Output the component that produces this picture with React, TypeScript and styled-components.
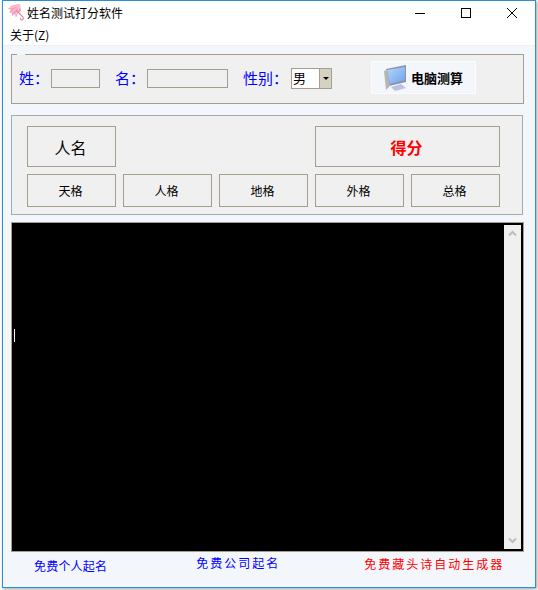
import { FC } from "react";
import styled, { createGlobalStyle } from "styled-components";

const GlobalStyle = createGlobalStyle`
  html, body {
    margin: 0;
    padding: 0;
    background: #ffffff;
  }
  * {
    box-sizing: border-box;
  }
`;

const Screen = styled.div`
  width: 538px;
  height: 590px;
  padding: 0 2px 2px 2px;
  overflow: hidden;
  font-family: "Noto Sans CJK SC", "Liberation Sans", sans-serif;
`;

const Window = styled.div`
  width: 534px;
  height: 588px;
  border: 1px solid #2b8fdc;
  box-shadow: 1px 1px 3px rgba(0, 0, 0, 0.4);
  display: flex;
  flex-direction: column;
  background: #f3f6fb;
`;

const TitleBar = styled.div`
  height: 24px;
  background: #ffffff;
  display: flex;
  align-items: center;
  padding-left: 3px;
`;

const AppTitle = styled.span`
  font-size: 12px;
  color: #000000;
  margin: -2px 0 0 1px;
`;

const WindowButtons = styled.div`
  margin-left: auto;
  display: flex;
  align-items: center;
  height: 100%;
`;

const WindowButton = styled.div`
  width: 46px;
  height: 100%;
  display: flex;
  align-items: center;
  justify-content: center;
`;

const MenuBar = styled.div`
  height: 20px;
  background: #ffffff;
  padding: 1px 0 0 7px;
  font-size: 12px;
  line-height: 18px;
  color: #000000;
`;

const MenuEdge = styled.div`
  height: 1px;
  background: #eef0f3;
`;

const Content = styled.div`
  flex: 1;
  display: flex;
  flex-direction: column;
  padding: 8px 10px 0 8px;
`;

const FormPanel = styled.div`
  position: relative;
  height: 50px;
  width: 513px;
  border: 1px solid #a59d8e;
  background: #f0f0f0;
  display: flex;
  align-items: center;
  padding: 0 0 2px 7px;
`;

const PanelNotch = styled.span`
  position: absolute;
  left: 5px;
  top: -1px;
  width: 8px;
  height: 1px;
  background: #f3f6fb;
`;

const FieldLabel = styled.span<{ $gap: number }>`
  font-size: 15px;
  line-height: 20px;
  color: #0000ff;
  margin-right: ${({ $gap }) => $gap}px;
  white-space: nowrap;
`;

const NameInput = styled.div<{ $width: number; $after: number }>`
  width: ${({ $width }) => $width}px;
  height: 19px;
  border: 1px solid #a59d8e;
  background: #f0f0f0;
  margin-right: ${({ $after }) => $after}px;
`;

const GenderSelect = styled.div`
  width: 41px;
  height: 21px;
  margin: 1px 39px 0 1px;
  border: 1px solid #a59d8e;
  background: #ffffff;
  display: flex;
  font-size: 13px;
  line-height: 18px;
  color: #000000;
  padding-left: 1px;
`;

const GenderValue = styled.span`
  flex: 1;
`;

const SelectArrow = styled.span`
  width: 12px;
  background: #d6d2c2;
  border-left: 1px solid #a59d8e;
  display: flex;
  align-items: center;
  justify-content: center;

  &::after {
    content: "";
    border-left: 3px solid transparent;
    border-right: 3px solid transparent;
    border-top: 3px solid #000000;
  }
`;

const ComputeButton = styled.div`
  width: 105px;
  height: 33px;
  margin-top: -1px;
  border: 1px solid #fbfcfe;
  background: #f3f6fb;
  display: flex;
  align-items: center;
  padding-left: 11px;
  font-size: 13px;
  font-weight: 700;
  color: #000000;
  gap: 4px;
`;

const ScorePanel = styled.div`
  width: 512px;
  height: 100px;
  margin-top: 11px;
  border: 1px solid #a9a9a9;
  background: #f0f0f0;
  padding: 10px 0 0 15px;
  display: grid;
  grid-template-columns: repeat(5, 89px);
  grid-template-rows: 41px 33px;
  column-gap: 7px;
  row-gap: 7px;
`;

const ScoreCell = styled.div<{ $span?: number; $start?: number; $size: number; $red?: boolean }>`
  grid-column: ${({ $start }) => $start ?? "auto"} / span ${({ $span }) => $span ?? 1};
  border: 1px solid #a59d8e;
  display: flex;
  align-items: center;
  justify-content: center;
  padding-right: 2px;
  font-size: ${({ $size }) => $size}px;
  font-weight: ${({ $red }) => ($red ? 700 : 400)};
  color: ${({ $red }) => ($red ? "#ff0000" : "#000000")};
`;

const Console = styled.div`
  position: relative;
  width: 513px;
  height: 330px;
  margin-top: 7px;
  border: 1px solid #a59d8e;
  background: #000000;
  display: flex;
  justify-content: flex-end;
  padding: 2px 2px 2px 0;
`;

const Caret = styled.span`
  position: absolute;
  left: 2px;
  top: 106px;
  width: 1px;
  height: 13px;
  background: #ffffff;
`;

const ScrollBar = styled.div`
  width: 17px;
  background: #f0f0f0;
  display: flex;
  flex-direction: column;
  justify-content: space-between;
`;

const ScrollArrow = styled.div`
  height: 17px;
  display: flex;
  align-items: center;
  justify-content: center;
`;

const LinkRow = styled.div`
  display: flex;
  font-size: 12px;
  line-height: 16px;
  position: relative;
`;

const FooterLink = styled.span<{ $left: number; $top: number; $spacing: number; $red?: boolean }>`
  margin-left: ${({ $left }) => $left}px;
  margin-top: ${({ $top }) => $top}px;
  letter-spacing: ${({ $spacing }) => $spacing}px;
  color: ${({ $red }) => ($red ? "#ff0000" : "#0000ff")};
  white-space: nowrap;
`;

const UmbrellaIcon: FC = () => (
  <svg width="20" height="20" viewBox="0 0 20 20">
    <path
      d="M14 1 L10 1.5 L5 3 L2 6 L5 6.5 L3 10 L6 9.5 L6 13 L8.5 11 L10 14.5 L12 10 L15 8 Z"
      fill="#f5a3b8"
    />
    <path d="M14 1.5 L4 5 M13.5 2.5 L5 10 M14 3 L9 13" stroke="#ffd9e2" strokeWidth="0.8" fill="none" />
    <path d="M10 7 L17 14 Q18 17 15.5 17 Q14 16.5 14.5 15" stroke="#e7839c" strokeWidth="1.1" fill="none" />
  </svg>
);

const MonitorIcon: FC = () => (
  <svg width="24" height="26" viewBox="0 0 24 26">
    <defs>
      <linearGradient id="monitorGlass" x1="0" y1="0" x2="1" y2="1">
        <stop offset="0" stopColor="#b4d6fb" />
        <stop offset="1" stopColor="#6ea2ee" />
      </linearGradient>
    </defs>
    <path d="M3 4 L23 0 L23 17 L6 21 Z" fill="#8793ad" />
    <path d="M4 5 L22 2 L22 15 L7 19 Z" fill="url(#monitorGlass)" />
    <path d="M8 22 L18 19 L23 23 L12 26 Z" fill="#b9c2e4" />
    <path d="M1 6 L4 5 L7 21 L3 25 Z" fill="#b5b5b5" />
  </svg>
);

const ChevronIcon: FC<{ down?: boolean }> = ({ down }) => (
  <svg width="9" height="7" viewBox="0 0 9 7">
    <path
      d={down ? "M1 1.5 L4.5 5 L8 1.5" : "M1 5.5 L4.5 2 L8 5.5"}
      stroke="#bdbdbd"
      strokeWidth="2"
      fill="none"
    />
  </svg>
);

const App: FC = () => {
  return (
    <Screen>
      <GlobalStyle />
      <Window>
        <TitleBar>
          <UmbrellaIcon />
          <AppTitle>姓名测试打分软件</AppTitle>
          <WindowButtons>
            <WindowButton>
              <svg width="10" height="10" viewBox="0 0 10 10">
                <path d="M0 5.5 H10" stroke="#000" strokeWidth="1" />
              </svg>
            </WindowButton>
            <WindowButton>
              <svg width="10" height="10" viewBox="0 0 10 10">
                <rect x="0.5" y="0.5" width="9" height="9" stroke="#000" fill="none" />
              </svg>
            </WindowButton>
            <WindowButton>
              <svg width="10" height="10" viewBox="0 0 10 10">
                <path d="M0 0 L10 10 M10 0 L0 10" stroke="#000" strokeWidth="1" />
              </svg>
            </WindowButton>
          </WindowButtons>
        </TitleBar>
        <MenuBar>关于(Z)</MenuBar>
        <MenuEdge />
        <Content>
          <FormPanel>
            <PanelNotch />
            <FieldLabel $gap={2}>姓：</FieldLabel>
            <NameInput $width={49} $after={15} />
            <FieldLabel $gap={2}>名：</FieldLabel>
            <NameInput $width={81} $after={15} />
            <FieldLabel $gap={2}>性别：</FieldLabel>
            <GenderSelect>
              <GenderValue>男</GenderValue>
              <SelectArrow />
            </GenderSelect>
            <ComputeButton>
              <MonitorIcon />
              电脑测算
            </ComputeButton>
          </FormPanel>
          <ScorePanel>
            <ScoreCell $size={16}>人名</ScoreCell>
            <ScoreCell $start={4} $span={2} $size={16} $red>
              得分
            </ScoreCell>
            <ScoreCell $size={12}>天格</ScoreCell>
            <ScoreCell $size={12}>人格</ScoreCell>
            <ScoreCell $size={12}>地格</ScoreCell>
            <ScoreCell $size={12}>外格</ScoreCell>
            <ScoreCell $size={12}>总格</ScoreCell>
          </ScorePanel>
          <Console>
            <Caret />
            <ScrollBar>
              <ScrollArrow>
                <ChevronIcon />
              </ScrollArrow>
              <ScrollArrow>
                <ChevronIcon down />
              </ScrollArrow>
            </ScrollBar>
          </Console>
          <LinkRow>
            <FooterLink $left={23} $top={6} $spacing={0.2}>
              免费个人起名
            </FooterLink>
            <FooterLink $left={89} $top={3} $spacing={2}>
              免费公司起名
            </FooterLink>
            <FooterLink $left={84} $top={4} $spacing={2} $red>
              免费藏头诗自动生成器
            </FooterLink>
          </LinkRow>
        </Content>
      </Window>
    </Screen>
  );
};

export default App;
